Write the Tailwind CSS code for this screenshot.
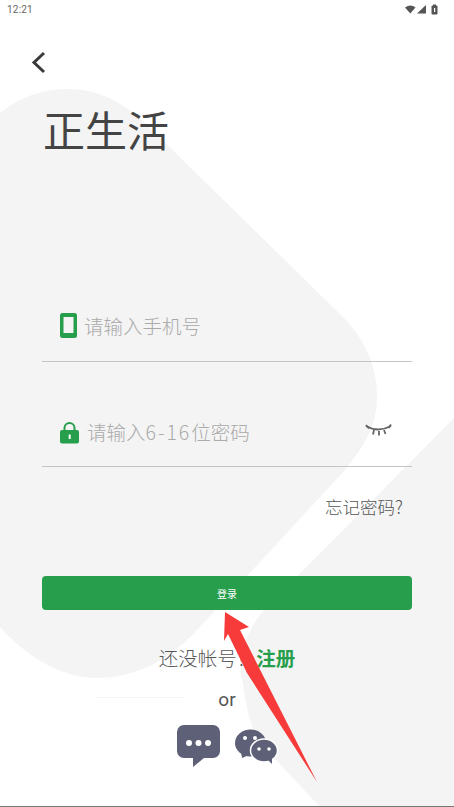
<!DOCTYPE html>
<html lang="zh">
<head>
<meta charset="utf-8">
<script src="https://cdn.jsdelivr.net/npm/@tailwindcss/browser@4"></script>
</head>
<body class="bg-white">
<div class="relative w-[454px] h-[807px] overflow-hidden bg-white font-['Roboto','Noto_Sans_CJK_SC',sans-serif]">
  <svg class="absolute inset-0" width="454" height="807" viewBox="0 0 454 807" fill="none">
    <path d="M0 113 C20 97 42 89 67 89 C100 89 125 103 150 128 L343 317 C365 340 377 365 377 397 C377 425 365 445 345 470 L200 627 C170 660 135 678 97 678 C60 678 25 655 0 627 Z" fill="#f4f4f4"/>
    <path d="M454 418 L262 612 C240 640 238 670 243 683 C246 710 252 730 260 743 L320 807 L454 807 Z" fill="#f4f4f4"/>
  </svg>
  <div class="relative flex flex-col h-full">
    <div class="h-[20px] pl-[7px] flex items-center justify-between">
      <span class="text-[10px] leading-none text-[#666] tracking-[0.2px]">12:21</span>
      <svg width="36" height="12" viewBox="0 0 36 12" class="mr-[13px]">
        <path d="M0 3.5 Q5.5 -0.5 10.5 3.5 L5.3 9.5 Z" fill="#555"/>
        <path d="M12 9.5 L21 1 L21 9.5 Z" fill="#555"/>
        <rect x="26.5" y="1.5" width="6" height="9" rx="1" fill="#555"/>
        <rect x="28" y="0.5" width="3" height="1.5" fill="#555"/>
        <rect x="29" y="4" width="1.2" height="4" fill="#fff"/>
      </svg>
    </div>
    <div class="px-[31px] pt-[30px] h-[52px]">
      <svg width="16" height="24" viewBox="0 0 16 24" fill="none"><path d="M13 3 L3 12.5 L13 22" stroke="#3a3a3a" stroke-width="3"/></svg>
    </div>
    <h1 class="ml-[43px] mt-[32px] text-[42px] leading-[50px] font-normal text-[#444] font-['Noto_Sans_CJK_SC',sans-serif]">正生活</h1>
    <div class="mx-[42px] mt-[142px] flex flex-col">
      <div class="h-[66px] border-b border-[#c4c4c4] flex items-center pl-[18px] pb-[7px]">
        <svg width="17" height="25" viewBox="0 0 17 25"><path fill-rule="evenodd" d="M2.5 0 H14.5 A2.5 2.5 0 0 1 17 2.5 V22.5 A2.5 2.5 0 0 1 14.5 25 H2.5 A2.5 2.5 0 0 1 0 22.5 V2.5 A2.5 2.5 0 0 1 2.5 0 Z M3.5 4 V20 H13.5 V4 Z" fill="#269e4c"/></svg>
        <span class="ml-[7px] mt-[1px] text-[19.5px] text-[#aaa] font-light font-['Noto_Sans_CJK_SC',sans-serif]">请输入手机号</span>
      </div>
      <div class="h-[105px] border-b border-[#c4c4c4] flex items-end pl-[18px] pb-[20px] relative">
        <svg width="20" height="23" viewBox="0 0 20 23" fill="none" class="mb-[2px]">
          <path d="M4.5 10 V7 A5 5 0 0 1 14.5 7 V10" stroke="#269e4c" stroke-width="2"/>
          <rect x="0" y="9" width="19" height="13.5" rx="2" fill="#269e4c"/>
          <rect x="8.7" y="13.5" width="2" height="4.5" fill="#fff"/>
        </svg>
        <span class="ml-[7px] text-[19.5px] leading-[28px] text-[#aaa] font-light font-['Noto_Sans_CJK_SC',sans-serif]">请输入<span class="tracking-[2px]">6-16</span>位密码</span>
        <svg class="absolute right-[20px] top-[62px]" width="27" height="13" viewBox="0 0 27 13" fill="none" stroke="#666" stroke-width="1.8">
          <path d="M1 2 Q13 9 26 2"/><path d="M4 4.5 L1 1"/><path d="M9 6 L8 10.5"/><path d="M14 7 L14 11.5"/><path d="M19 6 L20.5 10"/><path d="M23.5 4 L26 0.5"/>
        </svg>
      </div>
      <div class="mt-[27px] text-right text-[17.5px] leading-[26px] pr-[9px] text-[#555] font-light font-['Noto_Sans_CJK_SC',sans-serif]">忘记密码?</div>
      <button class="mt-[56px] h-[34px] w-full rounded-[4px] bg-[#269e4c] text-white text-[10px] font-['Noto_Sans_CJK_SC',sans-serif]">登录</button>
      <div class="mt-[34px] text-center text-[19.5px] leading-[28px] text-[#555] font-light font-['Noto_Sans_CJK_SC',sans-serif]">还没帐号？<span class="font-bold text-[#269e4c]">注册</span></div>
      <div class="mt-[14px] text-center text-[19px] leading-[28px] text-[#555]">or</div>
      <div class="mt-[11px] flex justify-center items-start gap-[15px]">
        <svg width="43" height="42" viewBox="0 0 43 42">
          <path d="M7 0 H36 A7 7 0 0 1 43 7 V26 A7 7 0 0 1 36 33 H27 L16 42 V33 H7 A7 7 0 0 1 0 26 V7 A7 7 0 0 1 7 0 Z" fill="#5d6077"/>
          <circle cx="12" cy="18" r="3" fill="#fff"/><circle cx="21.5" cy="18" r="3" fill="#fff"/><circle cx="31" cy="18" r="3" fill="#fff"/>
        </svg>
        <svg width="43" height="36" viewBox="0 0 43 36" class="mt-[4px]">
          <ellipse cx="15.5" cy="14" rx="15.5" ry="13.5" fill="#5d6077"/>
          <path d="M6 23 L7 29 L14 26 Z" fill="#5d6077"/>
          <ellipse cx="29" cy="21.5" rx="13.5" ry="11.5" fill="#5d6077" stroke="#fff" stroke-width="1.5"/>
          <path d="M33 31 L37 35 L37 29 Z" fill="#5d6077"/>
          <circle cx="10" cy="9" r="2" fill="#fff"/><circle cx="20" cy="9" r="2" fill="#fff"/>
          <circle cx="24" cy="20" r="1.8" fill="#fff"/><circle cx="34" cy="20" r="1.8" fill="#fff"/>
        </svg>
      </div>
    </div>
  </div>
  <div class="absolute left-[95px] top-[697px] w-[90px] h-px bg-[#f4f4f4]"></div>
  <svg class="absolute inset-0 pointer-events-none" width="454" height="807" viewBox="0 0 454 807">
    <path d="M225 612 L249 627 L240 630 L317 782 L247 673 L228 634 L224 641 Z" fill="#f73b3b"/>
  </svg>
  <div class="absolute left-0 right-0 bottom-0 h-px bg-[#777]"></div>
</div>
</body>
</html>
